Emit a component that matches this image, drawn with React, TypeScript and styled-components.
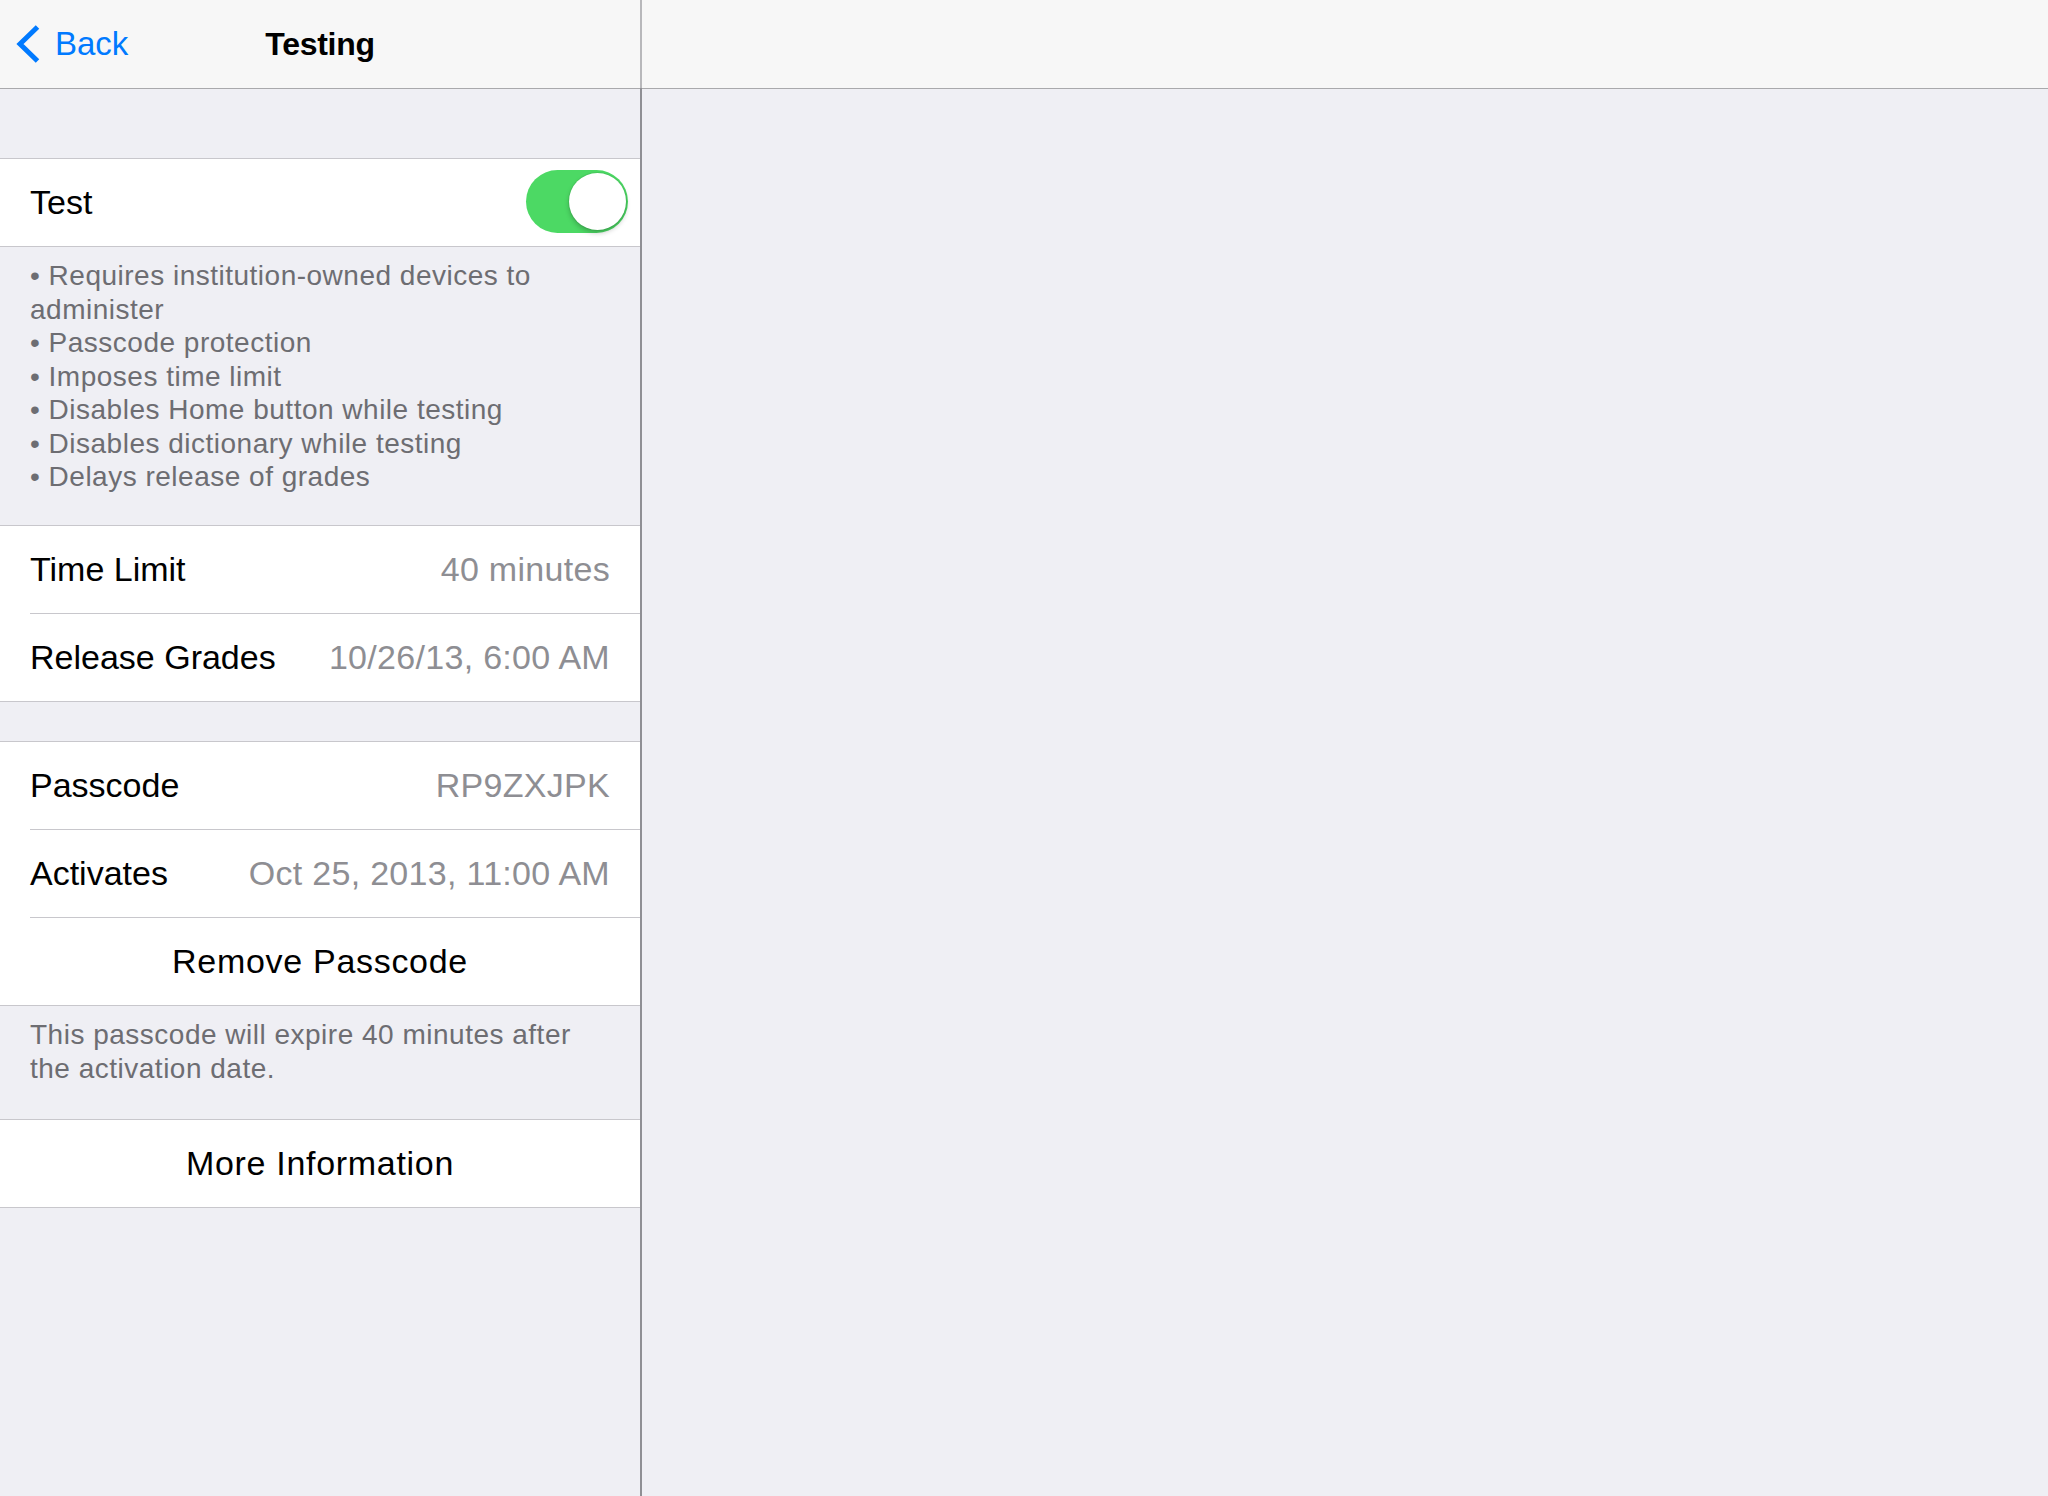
import React from "react";
import styled, { createGlobalStyle } from "styled-components";

const GlobalStyle = createGlobalStyle`
  html, body {
    margin: 0;
    padding: 0;
    height: 100%;
    background: #efeff4;
  }
  body {
    font-family: "Liberation Sans", Arial, Helvetica, sans-serif;
    -webkit-font-smoothing: antialiased;
  }
  #root {
    height: 100%;
  }
`;

const Screen = styled.div`
  display: flex;
  width: 100%;
  height: 1496px;
  background: #efeff4;
  overflow: hidden;
`;

const MasterPane = styled.div`
  width: 640px;
  flex: 0 0 640px;
  display: flex;
  flex-direction: column;
`;

const DetailPane = styled.div`
  flex: 1;
  display: flex;
  flex-direction: column;
`;

const Divider = styled.div`
  flex: 0 0 2px;
  display: flex;
  flex-direction: column;
`;

const DividerPart = styled.div<{ $light?: boolean }>`
  flex: ${(p) => (p.$light ? "0 0 88px" : "1")};
  background: ${(p) => (p.$light ? "#b8b8bb" : "#8f8f94")};
`;

const NavBar = styled.div`
  height: 88px;
  background: #f7f7f7;
  border-bottom: 1px solid #a9a9ac;
  display: grid;
  grid-template-columns: 1fr auto 1fr;
  align-items: center;
`;

const BackButton = styled.div`
  display: flex;
  align-items: center;
  padding-left: 16px;
  color: #007aff;
  font-size: 33px;
  gap: 13px;
`;

const Title = styled.div`
  font-size: 32px;
  font-weight: 700;
  letter-spacing: -0.3px;
  color: #000;
`;

const Content = styled.div`
  flex: 1;
  background: #efeff4;
  display: flex;
  flex-direction: column;
`;

const Group = styled.div<{ $top: number }>`
  margin-top: ${(p) => p.$top}px;
  background: #fff;
  border-top: 1px solid #c8c7cc;
  border-bottom: 1px solid #c8c7cc;
`;

const Row = styled.div`
  display: flex;
  padding-left: 30px;
  &:last-child > div {
    border-bottom: none;
  }
`;

const RowInner = styled.div<{ $center?: boolean }>`
  flex: 1;
  height: 87px;
  border-bottom: 1px solid #c8c7cc;
  display: flex;
  align-items: center;
  justify-content: ${(p) => (p.$center ? "center" : "space-between")};
  padding-right: 30px;
`;

const Label = styled.span<{ $wide?: boolean }>`
  font-size: 34px;
  letter-spacing: ${(p) => (p.$wide ? "0.7px" : "0")};
  color: #000;
`;

const Value = styled.span`
  font-size: 34px;
  letter-spacing: 0.3px;
  color: #8e8e93;
`;

const Footer = styled.div<{ $height: number }>`
  height: ${(p) => p.$height}px;
  box-sizing: border-box;
  padding: 12px 30px 0 30px;
  font-size: 28px;
  letter-spacing: 0.5px;
  line-height: 33.5px;
  color: #6d6d72;
`;

const FooterLine = styled.div`
  white-space: nowrap;
`;

const SwitchTrack = styled.div`
  position: relative;
  width: 102px;
  height: 63px;
  border-radius: 32px;
  background: #4cd964;
  margin-right: -18px;
  margin-top: -2px;
  flex: 0 0 auto;
`;

const SwitchKnob = styled.div`
  position: absolute;
  top: 3px;
  right: 2px;
  width: 57px;
  height: 57px;
  border-radius: 50%;
  background: #fff;
  box-shadow: 0 3px 5px rgba(0, 0, 0, 0.22), 0 0 0 1px rgba(0, 0, 0, 0.06);
`;

const Chevron = () => (
  <svg width="26" height="42" viewBox="0 0 26 42" aria-hidden="true">
    <polyline
      points="21.5,4 4,21 21.5,38"
      fill="none"
      stroke="#007aff"
      strokeWidth="5"
      strokeLinecap="butt"
      strokeLinejoin="miter"
    />
  </svg>
);

const Switch = () => (
  <SwitchTrack>
    <SwitchKnob />
  </SwitchTrack>
);

const bullets = [
  "• Requires institution-owned devices to",
  "administer",
  "• Passcode protection",
  "• Imposes time limit",
  "• Disables Home button while testing",
  "• Disables dictionary while testing",
  "• Delays release of grades",
];

export default function App() {
  return (
    <>
      <GlobalStyle />
      <Screen>
        <MasterPane>
          <NavBar>
            <BackButton>
              <Chevron />
              <span>Back</span>
            </BackButton>
            <Title>Testing</Title>
            <div />
          </NavBar>
          <Content>
            <Group $top={69}>
              <Row>
                <RowInner>
                  <Label>Test</Label>
                  <Switch />
                </RowInner>
              </Row>
            </Group>
            <Footer $height={278}>
              {bullets.map((b) => (
                <FooterLine key={b}>{b}</FooterLine>
              ))}
            </Footer>
            <Group $top={0}>
              <Row>
                <RowInner>
                  <Label>Time Limit</Label>
                  <Value>40 minutes</Value>
                </RowInner>
              </Row>
              <Row>
                <RowInner>
                  <Label>Release Grades</Label>
                  <Value>10/26/13, 6:00 AM</Value>
                </RowInner>
              </Row>
            </Group>
            <Group $top={39}>
              <Row>
                <RowInner>
                  <Label>Passcode</Label>
                  <Value>RP9ZXJPK</Value>
                </RowInner>
              </Row>
              <Row>
                <RowInner>
                  <Label>Activates</Label>
                  <Value>Oct 25, 2013, 11:00 AM</Value>
                </RowInner>
              </Row>
              <Row>
                <RowInner $center>
                  <Label $wide>Remove Passcode</Label>
                </RowInner>
              </Row>
            </Group>
            <Footer $height={113}>
              <FooterLine>This passcode will expire 40 minutes after</FooterLine>
              <FooterLine>the activation date.</FooterLine>
            </Footer>
            <Group $top={0}>
              <Row>
                <RowInner $center>
                  <Label $wide>More Information</Label>
                </RowInner>
              </Row>
            </Group>
          </Content>
        </MasterPane>
        <Divider>
          <DividerPart $light />
          <DividerPart />
        </Divider>
        <DetailPane>
          <NavBar />
          <Content />
        </DetailPane>
      </Screen>
    </>
  );
}
